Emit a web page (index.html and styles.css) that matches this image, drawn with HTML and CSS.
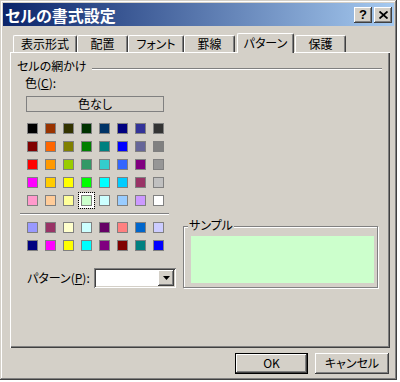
FILE: index.html
```html
<!DOCTYPE html>
<html lang="ja">
<head>
    <meta charset="UTF-8">
    <title>セルの書式設定</title>
    <link rel="stylesheet" href="styles.css">
</head>
<body>
    <div class="dialog">
        <div class="titlebar">
            <span class="title">セルの書式設定</span>
            <div class="caption-buttons">
                <span class="cap-btn help">?</span>
                <span class="cap-btn close">
                    <svg width="9" height="8" viewBox="0 0 9 8"><path d="M0.5 0.5 L8.5 7.5 M8.5 0.5 L0.5 7.5" stroke="#000" stroke-width="1.8"/></svg>
                </span>
            </div>
        </div>

        <div class="tabs">
            <div class="tab tab-format">表示形式</div>
            <div class="tab tab-align">配置</div>
            <div class="tab tab-font">フォント</div>
            <div class="tab tab-border">罫線</div>
            <div class="tab tab-pattern active">パターン</div>
            <div class="tab tab-protect">保護</div>
        </div>

        <div class="panel">
            <div class="group-head">
                <span>セルの網かけ</span>
                <div class="etched"></div>
            </div>
            <div class="content">
                <div class="left">
                    <div class="color-label">色(<u>C</u>):</div>
                    <div class="none-btn">色なし</div>
                    <div class="swatches" id="basicColors"></div>
                    <div class="separator"></div>
                    <div class="swatches" id="chartColors"></div>
                    <div class="pattern-row">
                        <span class="pattern-label">パターン(<u>P</u>):</span>
                        <div class="combo">
                            <div class="combo-btn">
                                <svg width="7" height="4" viewBox="0 0 7 4"><polygon points="0,0 7,0 3.5,4" fill="#000"/></svg>
                            </div>
                        </div>
                    </div>
                </div>
                <div class="sample">
                    <span class="sample-title">サンプル</span>
                    <div class="sample-fill"></div>
                </div>
            </div>
        </div>

        <div class="actions">
            <div class="btn btn-ok default">OK</div>
            <div class="btn btn-cancel">キャンセル</div>
        </div>
    </div>

    <script>
        // Excel standard 56 colour palette, in picker order
        const basicColors = [
            '#000000', '#993300', '#333300', '#003300', '#003366', '#000080', '#333399', '#333333',
            '#800000', '#FF6600', '#808000', '#008000', '#008080', '#0000FF', '#666699', '#808080',
            '#FF0000', '#FF9900', '#99CC00', '#339966', '#33CCCC', '#3366FF', '#800080', '#969696',
            '#FF00FF', '#FFCC00', '#FFFF00', '#00FF00', '#00FFFF', '#00CCFF', '#993366', '#C0C0C0',
            '#FF99CC', '#FFCC99', '#FFFF99', '#CCFFCC', '#CCFFFF', '#99CCFF', '#CC99FF', '#FFFFFF'
        ];
        const chartColors = [
            '#9999FF', '#993366', '#FFFFCC', '#CCFFFF', '#660066', '#FF8080', '#0066CC', '#CCCCFF',
            '#000080', '#FF00FF', '#FFFF00', '#00FFFF', '#800080', '#800000', '#008080', '#0000FF'
        ];
        const selectedIndex = 35; // light green

        function fillSwatches(id, colors, selected) {
            const box = document.getElementById(id);
            colors.forEach((color, i) => {
                const swatch = document.createElement('div');
                swatch.className = 'swatch';
                if (i === selected) swatch.classList.add('selected');
                swatch.style.backgroundColor = color;
                box.appendChild(swatch);
            });
        }

        fillSwatches('basicColors', basicColors, selectedIndex);
        fillSwatches('chartColors', chartColors, -1);
    </script>
</body>
</html>
```

FILE: styles.css
```css
body {
    margin: 0;
    background-color: #fff;
    font-family: "Noto Sans CJK JP", sans-serif;
    font-size: 12px;
    line-height: 14px;
    font-feature-settings: "palt" 1;
    color: #000;
}
.dialog {
    width: 397px;
    height: 380px;
    box-sizing: border-box;
    padding: 3px;
    background-color: #d4d0c8;
    box-shadow: inset -1px -1px #404040, inset 1px 1px #d4d0c8, inset -2px -2px #808080, inset 2px 2px #fff;
}

/* title bar */
.titlebar {
    height: 23px;
    display: flex;
    align-items: center;
    justify-content: space-between;
    padding: 0 2px;
    background: linear-gradient(to right, #0a246a, #a6caf0);
}
.title {
    color: #fff;
    font-size: 16px;
    font-weight: bold;
    line-height: 20px;
}
.caption-buttons {
    display: flex;
    gap: 2px;
}
.cap-btn {
    width: 18px;
    height: 16px;
    box-sizing: border-box;
    display: flex;
    align-items: center;
    justify-content: center;
    background-color: #d4d0c8;
    box-shadow: inset -1px -1px #404040, inset 1px 1px #fff, inset -2px -2px #808080;
}
.help {
    font-family: "Liberation Sans", sans-serif;
    font-weight: bold;
    font-size: 13px;
    line-height: 14px;
}

/* tabs */
.tabs {
    display: flex;
    align-items: flex-end;
    height: 19px;
    margin: 7px 0 0 7px;
    padding-left: 3px;
}
.tab {
    height: 17px;
    box-sizing: border-box;
    border-top: 1px solid #fff;
    border-left: 1px solid #fff;
    border-right: 1px solid #404040;
    border-radius: 2px 2px 0 0;
    box-shadow: inset -1px 0 #808080;
    text-align: center;
    line-height: 16px;
    background-color: #d4d0c8;
}
.tab-format { width: 64px; }
.tab-align { width: 51px; }
.tab-font { width: 56px; }
.tab-border { width: 51px; }
.tab-pattern { width: 57px; }
.tab-protect { width: 51px; }
.tab.active {
    height: 20px;
    margin: 0 1px -1px 2px;
    line-height: 18px;
    position: relative;
    z-index: 1;
}

/* page */
.panel {
    width: 380px;
    height: 296px;
    margin-left: 7px;
    padding-top: 7px;
    box-sizing: border-box;
    box-shadow: inset 1px 1px #fff, inset -1px -1px #404040, inset -2px -2px #808080;
}
.group-head {
    display: flex;
    align-items: flex-start;
    height: 14px;
    padding: 0 8px 0 7px;
}
.etched {
    flex: 1;
    margin: 9px 0 0 5px;
    border-top: 1px solid #808080;
    border-bottom: 1px solid #fff;
}
.content {
    display: flex;
}
.left {
    width: 173px;
}
.color-label {
    margin: 3px 0 0 15px;
}
.none-btn {
    width: 138px;
    height: 16px;
    margin: 6px 0 0 16px;
    box-sizing: border-box;
    border: 1px solid #808080;
    text-align: center;
    line-height: 14px;
}
.swatches {
    display: grid;
    grid-template-columns: repeat(8, 11px);
    grid-auto-rows: 11px;
    gap: 7px;
    margin: 11px 0 0 17px;
}
.separator + .swatches {
    margin-top: 7px;
}
.swatch {
    width: 11px;
    height: 11px;
    box-sizing: border-box;
    border: 1px solid #808080;
}
.swatch.selected {
    outline: 1px dotted #000;
    outline-offset: 2px;
    box-shadow: 0 0 0 2px #fff;
}
.separator {
    width: 149px;
    margin: 7px 0 0 10px;
    border-top: 1px solid #808080;
    border-bottom: 1px solid #fff;
}
.pattern-row {
    display: flex;
    align-items: center;
    margin: 17px 0 0 17px;
}
.pattern-label {
    width: 67px;
}
.combo {
    width: 82px;
    height: 20px;
    box-sizing: border-box;
    padding: 2px;
    display: flex;
    justify-content: flex-end;
    background-color: #fff;
    box-shadow: inset 1px 1px #808080, inset -1px -1px #fff, inset 2px 2px #404040, inset -2px -2px #d4d0c8;
}
.combo-btn {
    width: 16px;
    height: 16px;
    box-sizing: border-box;
    display: flex;
    align-items: center;
    justify-content: center;
    background-color: #d4d0c8;
    box-shadow: inset -1px -1px #404040, inset 1px 1px #fff, inset -2px -2px #808080;
}

/* sample group */
.sample {
    width: 195px;
    height: 62px;
    margin-top: 153px;
    box-sizing: border-box;
    border: 1px solid #808080;
    box-shadow: 1px 1px #fff, inset 1px 1px #fff;
    display: flex;
    flex-direction: column;
    align-items: flex-start;
}
.sample-title {
    margin: -9px 0 0 4px;
    padding: 0 1px;
    background-color: #d4d0c8;
}
.sample-fill {
    width: 183px;
    height: 47px;
    margin: 4px 0 0 7px;
    background-color: #ccffcc;
}

/* dialog buttons */
.actions {
    display: flex;
    justify-content: flex-end;
    gap: 7px;
    margin: 5px 5px 0 0;
}
.btn {
    height: 21px;
    box-sizing: border-box;
    text-align: center;
    line-height: 20px;
    box-shadow: inset -1px -1px #404040, inset 1px 1px #fff, inset -2px -2px #808080;
}
.btn-ok { width: 73px; }
.btn-cancel { width: 74px; }
.btn.default {
    border: 1px solid #000;
    line-height: 18px;
}
```
